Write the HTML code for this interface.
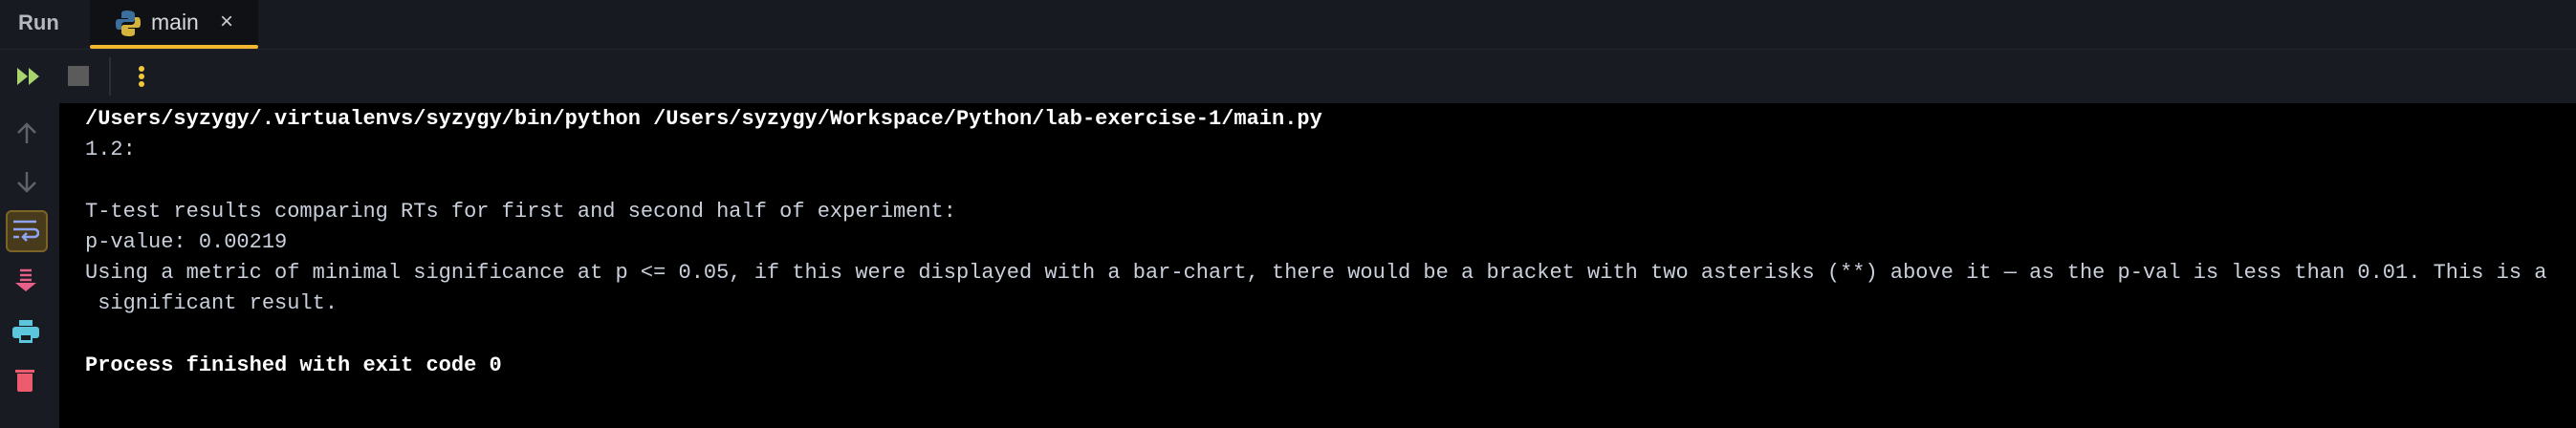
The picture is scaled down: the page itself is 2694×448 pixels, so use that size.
<!DOCTYPE html>
<html><head><meta charset="utf-8"><style>
html,body{margin:0;padding:0;width:2694px;height:448px;overflow:hidden;background:#000;font-family:"Liberation Sans",sans-serif}
#tabbar{position:absolute;left:0;top:0;width:2694px;height:51px;background:#171a20;border-bottom:1px solid #23262d}
#run{position:absolute;left:19px;top:11px;font-size:22px;color:#b4b8bf;font-weight:bold}
#tab{position:absolute;left:94px;top:0;width:176px;height:51px;background:#0f1115}
#tab .u{position:absolute;left:0;bottom:0;width:176px;height:4px;background:#f0b72f;border-radius:2px}
#tab .t{position:absolute;left:64px;top:10px;font-size:23px;color:#d6d9de}
#tab .x{position:absolute;left:136px;top:9px;font-size:24px;color:#c8cbd0}
#toolbar{position:absolute;left:0;top:52px;width:2694px;height:56px;background:#181b21}
#side{position:absolute;left:0;top:108px;width:62px;height:340px;background:#181b21}
pre{position:absolute;left:89px;top:109px;margin:0;font-family:"Liberation Mono",monospace;font-size:22px;line-height:32.2px;color:#c9d0dc}
b{color:#fff}
</style></head><body>
<div id="tabbar"><div id="run">Run</div>
<div id="tab">
<svg style="position:absolute;left:26px;top:10px" width="28" height="29" viewBox="0 0 28 29">
<path d="M13 1C7 1 7 3 7 5v4h7v1H4C1 10 1 13 1 15s0 6 3 6h3v-4c0-3 2-4 4-4h7c2 0 3-1 3-3V5c0-2-2-4-8-4z" fill="#3d6f9e"/>
<path d="M15 28c6 0 6-2 6-4v-4h-7v-1h10c3 0 3-3 3-5s0-6-3-6h-3v4c0 3-2 4-4 4h-7c-2 0-3 1-3 3v5c0 2 2 4 8 4z" fill="#d4b43a"/>
</svg>
<div class="t">main</div><div class="x">×</div><div class="u"></div></div>
</div>
<div id="toolbar">
<svg style="position:absolute;left:17px;top:17px" width="26" height="22"><path d="M1 2l11 9-11 9zM13 2l11 9-11 9z" fill="#a9d46d"/></svg>
<div style="position:absolute;left:71px;top:17px;width:22px;height:21px;background:#5b5b5b"></div>
<div style="position:absolute;left:114px;top:8px;width:2px;height:40px;background:#2c2f36"></div>
<div style="position:absolute;left:145px;top:17px;width:6px;height:6px;border-radius:3px;background:#f0c83a;box-shadow:0 8px 0 #f0c83a,0 16px 0 #f0c83a"></div>
</div>
<div id="side">
<svg style="position:absolute;left:16px;top:20px" width="26" height="24"><path d="M12 22V3M3 11l9-9 9 9" stroke="#5e636b" stroke-width="2.5" fill="none"/></svg>
<svg style="position:absolute;left:16px;top:71px" width="26" height="24"><path d="M12 1v19M3 12l9 9 9-9" stroke="#5e636b" stroke-width="2.5" fill="none"/></svg>
<div style="position:absolute;left:6px;top:112px;width:40px;height:40px;background:#473b1b;border:2px solid #7c6427;border-radius:6px"></div>
<svg style="position:absolute;left:13px;top:122px" width="28" height="24"><path d="M1 2h24M1 10h22a4 4 0 0 1 0 8H11M15 14l-4 4 4 4M1 18h6" stroke="#8fa3f2" stroke-width="2.6" fill="none"/></svg>
<svg style="position:absolute;left:15px;top:173px" width="24" height="26"><path d="M6 2h12M6 7h12M6 12h12" stroke="#e8608a" stroke-width="2.5"/><path d="M1 15h22l-11 9z" fill="#e8608a"/></svg>
<svg style="position:absolute;left:12px;top:226px" width="30" height="26"><rect x="8" y="1" width="14" height="6" fill="#5bc6dc"/><rect x="1" y="8" width="28" height="12" rx="3" fill="#5bc6dc"/><rect x="8" y="15" width="14" height="10" fill="#5bc6dc"/><rect x="10" y="17" width="10" height="5" fill="#181b21"/></svg>
<svg style="position:absolute;left:16px;top:278px" width="22" height="26"><rect x="0" y="1" width="20" height="3" fill="#ec5b6e"/><path d="M2 5h16v17a2 2 0 0 1-2 2H4a2 2 0 0 1-2-2z" fill="#ec5b6e"/></svg>
</div>
<pre><b>/Users/syzygy/.virtualenvs/syzygy/bin/python /Users/syzygy/Workspace/Python/lab-exercise-1/main.py</b>
1.2:

T-test results comparing RTs for first and second half of experiment:
p-value: 0.00219
Using a metric of minimal significance at p &lt;= 0.05, if this were displayed with a bar-chart, there would be a bracket with two asterisks (**) above it — as the p-val is less than 0.01. This is a
 significant result.

<b>Process finished with exit code 0</b></pre>
</body></html>
